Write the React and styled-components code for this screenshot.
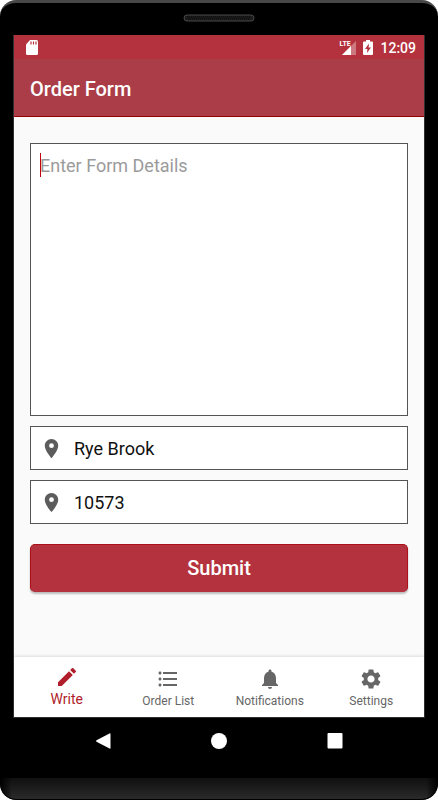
import React, { useState } from "react";
import styled, { createGlobalStyle } from "styled-components";
import {
  MdEdit,
  MdFormatListBulleted,
  MdNotifications,
  MdPlace,
  MdSettings,
} from "react-icons/md";

const GlobalStyle = createGlobalStyle`
  * {
    box-sizing: border-box;
  }
  body {
    margin: 0;
    background: white;
    font-family: Roboto, "Liberation Sans", sans-serif;
  }
  button, input, textarea {
    font-family: inherit;
  }
`;

const Phone = styled.div`
  min-height: 100vh;
  display: flex;
  flex-direction: column;
  background: black;
  border-top: 3px solid #484848;
  border-bottom: 1px solid black;
  border-radius: 16px;
  overflow: hidden;
`;

const Earpiece = styled.div`
  height: 32px;
  display: flex;
  justify-content: center;
  padding-top: 11px;
`;

const Screen = styled.div`
  flex: 1;
  margin: 0 13px;
  display: flex;
  flex-direction: column;
  background: #fafafa;
  border: solid #303030;
  border-width: 0 1px 1px;
`;

const StatusBar = styled.div`
  height: 24px;
  padding: 1px 8px 0 12px;
  display: flex;
  align-items: center;
  background: #b4323e;
  color: white;
`;

const StatusIcons = styled.div`
  margin-left: auto;
  display: flex;
  align-items: center;
  gap: 7px;
`;

const Clock = styled.span`
  font-size: 14px;
  font-weight: 500;
`;

const AppBar = styled.header`
  height: 58px;
  padding: 2px 16px 0;
  display: flex;
  align-items: center;
  background: #aa3d47;
  border-bottom: 1px solid #990000;
  color: white;
`;

const Title = styled.h1`
  margin: 0;
  font-size: 20px;
  font-weight: 500;
`;

const Form = styled.form`
  flex: 1;
  padding: 26px 16px;
  display: flex;
  flex-direction: column;
  gap: 10px;
`;

const DetailsBox = styled.div`
  position: relative;
  display: flex;
`;

const Details = styled.textarea`
  width: 100%;
  height: 273px;
  padding: 8px 9px;
  border: 1px solid #555555;
  border-radius: 0;
  background: white;
  font-size: 18px;
  line-height: 28px;
  resize: none;
  outline: none;
  caret-color: transparent;
  &::placeholder {
    color: #9b9b9b;
  }
`;

const Caret = styled.span`
  position: absolute;
  top: 10px;
  left: 10px;
  width: 1px;
  height: 24px;
  background: #c00010;
`;

const Field = styled.label`
  height: 44px;
  padding: 0 10px 0 9px;
  display: flex;
  align-items: center;
  gap: 11px;
  background: white;
  border: 1px solid #555555;
  color: #5c5c5c;
`;

const FieldInput = styled.input`
  flex: 1;
  min-width: 0;
  padding: 0;
  border: none;
  outline: none;
  background: transparent;
  color: #111111;
  font-size: 18px;
`;

const Submit = styled.button`
  height: 48px;
  margin-top: 10px;
  border: 1px solid #ab1018;
  border-bottom-color: #b4323e;
  border-radius: 5px;
  background: #b4323e;
  color: white;
  font-size: 20px;
  font-weight: 500;
  cursor: pointer;
  box-shadow: 0 2px 2px rgba(0, 0, 0, 0.25);
`;

const TabBar = styled.nav`
  height: 60px;
  padding: 0 2px;
  display: flex;
  background: white;
  box-shadow: 0 -1px 3px rgba(0, 0, 0, 0.12);
`;

const Tab = styled.button`
  flex: 1 1 0;
  padding: ${(props) => (props.$active ? "8px 0 0" : "10px 0 0")};
  display: flex;
  flex-direction: column;
  align-items: center;
  gap: 1px;
  border: none;
  background: transparent;
  color: ${(props) => (props.$active ? "#b01e2b" : "#666666")};
  font-size: ${(props) => (props.$active ? "14px" : "12px")};
  line-height: 18px;
  cursor: pointer;
`;

const SystemNav = styled.div`
  height: 60px;
  padding: 0 45px;
  display: flex;
  align-items: flex-start;
  justify-content: space-around;
`;

const SystemButton = styled.button`
  padding: 15px 12px;
  display: flex;
  border: none;
  background: transparent;
  cursor: pointer;
`;

const Chin = styled.div`
  height: 21px;
  background:
    linear-gradient(90deg, black, transparent 12px calc(100% - 12px), black),
    linear-gradient(#101010, #2a2a2a);
  border-radius: 0 0 16px 16px;
`;

const Grille = () => (
  <svg width="72" height="8" viewBox="0 0 72 8" fill="none">
    <rect x="1" y="1" width="70" height="6" rx="3" fill="#1c1c1c" stroke="#484848" />
    <path d="M4 3h64M5 5h62" stroke="#050505" strokeDasharray="1 1" />
  </svg>
);

const SdCard = () => (
  <svg width="12" height="15" viewBox="0 0 12 15">
    <path
      d="M4 0h6.5Q12 0 12 1.500V13.500Q12 15 10.500 15h-9Q0 15 0 13.500V4.500z"
      fill="white"
    />
    <path d="M5 1.500v3M7.500 1.500v3M10 1.500v3" stroke="#b4323e" strokeWidth="1.200" />
  </svg>
);

const Signal = () => (
  <svg width="14" height="14" viewBox="0 0 14 14">
    <path d="M14 0v14H0z" fill="white" opacity="0.35" />
    <path d="M9 5v9H0z" fill="white" />
  </svg>
);

const Battery = () => (
  <svg width="10" height="15" viewBox="0 0 10 15">
    <path
      d="M3 0h4v1.500h2q1 0 1 1V14q0 1-1 1H1q-1 0-1-1V2.500q0-1 1-1h2z"
      fill="white"
    />
    <path d="M6 3.500L2 9h2.400L4 13l4-5.500H5.600z" fill="#b4323e" />
  </svg>
);

const Network = styled.div`
  position: relative;
  display: flex;
  padding-left: 3px;
`;

const NetworkType = styled.span`
  position: absolute;
  top: -1px;
  left: 0;
  font-family: "Liberation Sans Narrow", Roboto, sans-serif;
  font-size: 7px;
  font-weight: 700;
  line-height: 8px;
`;

const tabs = [
  { name: "Write", icon: MdEdit },
  { name: "Order List", icon: MdFormatListBulleted },
  { name: "Notifications", icon: MdNotifications },
  { name: "Settings", icon: MdSettings },
];

function App() {
  const [tab, setTab] = useState("Write");
  const [details, setDetails] = useState("");
  const [city, setCity] = useState("Rye Brook");
  const [zip, setZip] = useState("10573");

  return (
    <Phone>
      <GlobalStyle />
      <Earpiece>
        <Grille />
      </Earpiece>
      <Screen>
        <StatusBar>
          <SdCard />
          <StatusIcons>
            <Network>
              <NetworkType>LTE</NetworkType>
              <Signal />
            </Network>
            <Battery />
            <Clock>12:09</Clock>
          </StatusIcons>
        </StatusBar>
        <AppBar>
          <Title>Order Form</Title>
        </AppBar>
        <Form onSubmit={(e) => e.preventDefault()}>
          <DetailsBox>
            <Details
              aria-label="Form details"
              placeholder="Enter Form Details"
              value={details}
              onChange={(e) => setDetails(e.target.value)}
            />
            {details === "" && <Caret />}
          </DetailsBox>
          <Field>
            <MdPlace size={23} />
            <FieldInput
              aria-label="City"
              value={city}
              onChange={(e) => setCity(e.target.value)}
            />
          </Field>
          <Field>
            <MdPlace size={23} />
            <FieldInput
              aria-label="Zip code"
              value={zip}
              onChange={(e) => setZip(e.target.value)}
            />
          </Field>
          <Submit type="submit">Submit</Submit>
        </Form>
        <TabBar>
          {tabs.map(({ name, icon: Icon }) => (
            <Tab key={name} $active={tab === name} onClick={() => setTab(name)}>
              <Icon size={24} />
              {name}
            </Tab>
          ))}
        </TabBar>
      </Screen>
      <SystemNav>
        <SystemButton aria-label="Back">
          <svg width="16" height="16" viewBox="0 0 16 16" fill="white">
            <path d="M14.500 0.500Q15.500 0 15.500 1v14q0 1-1 0.500L1.500 8.800Q0.500 8 1.500 7.200z" />
          </svg>
        </SystemButton>
        <SystemButton aria-label="Home">
          <svg width="16" height="16" viewBox="0 0 16 16" fill="white">
            <circle cx="8" cy="8" r="8" />
          </svg>
        </SystemButton>
        <SystemButton aria-label="Recent apps">
          <svg width="16" height="16" viewBox="0 0 16 16" fill="white">
            <rect x="0.500" width="15" height="15.500" rx="1" />
          </svg>
        </SystemButton>
      </SystemNav>
      <Chin />
    </Phone>
  );
}

export default App;
